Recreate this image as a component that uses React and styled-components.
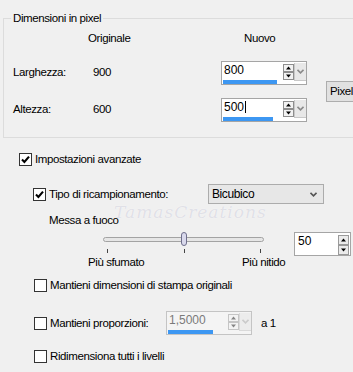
import React from "react";
import styled, { createGlobalStyle } from "styled-components";

const GlobalStyle = createGlobalStyle`
  html, body { margin: 0; padding: 0; background: #f0f0f0; }
  body {
    font-family: "Liberation Sans", Arial, sans-serif;
    font-size: 11.5px;
    letter-spacing: -0.4px;
    color: #000;
  }
`;

const Page = styled.div`
  position: relative;
  width: 353px;
  height: 372px;
  overflow: hidden;
  box-sizing: border-box;
  padding-left: 3px;
  background: #f0f0f0;
  line-height: 13px;
`;

/* ---------- group box ---------- */

const Group = styled.fieldset`
  margin: 12px 0 0 0;
  padding: 0 0 15px 9px;
  width: 390px;
  min-width: 0;
  box-sizing: border-box;
  border: 1px solid #dcdcdc;
`;

const Legend = styled.legend`
  padding: 0 2px;
  margin-left: -2px;
  line-height: 13px;
`;

const DimGrid = styled.div`
  display: grid;
  grid-template-columns: 75px 133px 86px auto;
  grid-template-rows: 16px 24px 24px;
  row-gap: 13px;
  align-items: center;
  margin-top: 7px;
`;

const Head = styled.div`
  align-self: start;
  padding-left: ${(p) => p.$pad || 0}px;
`;

const Cell = styled.div`
  padding-left: ${(p) => p.$pad || 0}px;
  padding-bottom: 2px;
`;

const PixelButton = styled.button`
  grid-column: 4;
  grid-row: 2 / span 2;
  align-self: center;
  margin: 0 0 0 19px;
  width: 60px;
  height: 21px;
  padding: 0 0 0 3px;
  text-align: left;
  font: inherit;
  letter-spacing: inherit;
  color: #000;
  background: #e1e1e1;
  border: 1px solid #adadad;
`;

/* ---------- number field with spin + drop ---------- */

const Field = styled.div`
  display: flex;
  flex-shrink: 0;
  width: ${(p) => p.$width}px;
  height: 24px;
  box-sizing: border-box;
  border: 1px solid ${(p) => (p.$disabled ? "#c4c4c4" : "#a5a5a5")};
  background: ${(p) => (p.$disabled ? "#f4f4f4" : "#fff")};
`;

const FieldMain = styled.div`
  display: flex;
  flex-direction: column;
  flex: 1;
  padding: 2px 0 0 1px;
`;

const FieldText = styled.div`
  padding-left: 1px;
  font-size: 12px;
  letter-spacing: 0;
  line-height: 13px;
  color: ${(p) => (p.$disabled ? "#7a7a7a" : "#000")};
`;

const Caret = styled.span`
  display: inline-block;
  width: 1px;
  height: 12px;
  margin-left: 1px;
  vertical-align: -2px;
  background: #000;
`;

const Bar = styled.div`
  margin-top: auto;
  height: 4px;
`;

const BarFill = styled.div`
  height: 100%;
  background: #3d97f2;
`;

const Spin = styled.div`
  display: flex;
  flex-direction: column;
  flex-shrink: 0;
  width: 11px;
  padding-top: 2px;
  opacity: ${(p) => (p.$disabled ? 0.45 : 1)};
`;

const SpinBtn = styled.div`
  display: flex;
  align-items: center;
  justify-content: center;
  width: 9px;
  height: 6px;
  border: 1px solid #8e8e8e;
  background: #f2f2f2;
`;

const DropBtn = styled.div`
  display: flex;
  flex-shrink: 0;
  align-items: center;
  justify-content: center;
  width: 12px;
  height: 18px;
  margin-top: 1px;
  box-sizing: border-box;
  border-left: 1px solid #c8c8c8;
  border-bottom: 1px solid #c8c8c8;
  background: #e8e8e8;
  opacity: ${(p) => (p.$disabled ? 0.6 : 1)};
`;

const Tri = ({ up, size = 5 }) => (
  <svg width={size} height={Math.ceil(size / 2) + 1} viewBox="0 0 5 3">
    <path d={up ? "M0 3 L2.5 0 L5 3 Z" : "M0 0 L2.5 3 L5 0 Z"} fill="#000" />
  </svg>
);

const Chevron = ({ color = "#8a8a8a" }) => (
  <svg width="7" height="5" viewBox="0 0 7 5">
    <path d="M0.5 0.8 L3.5 3.8 L6.5 0.8" stroke={color} strokeWidth="1.6" fill="none" />
  </svg>
);

function NumberField({ value, fill, width = 86, disabled, caret }) {
  return (
    <Field $width={width} $disabled={disabled}>
      <FieldMain>
        <FieldText $disabled={disabled}>
          {value}
          {caret && <Caret />}
        </FieldText>
        <Bar>
          <BarFill style={{ width: `${fill}px` }} />
        </Bar>
      </FieldMain>
      <Spin $disabled={disabled}>
        <SpinBtn><Tri up /></SpinBtn>
        <SpinBtn><Tri /></SpinBtn>
      </Spin>
      <DropBtn $disabled={disabled}>
        <Chevron color={disabled ? "#b0b0b0" : "#8a8a8a"} />
      </DropBtn>
    </Field>
  );
}

/* ---------- options ---------- */

const Row = styled.div`
  display: flex;
  align-items: center;
  height: ${(p) => p.$h || 13}px;
  margin-top: ${(p) => p.$mt || 0}px;
  padding-left: ${(p) => p.$indent || 0}px;
`;

const CheckLabel = styled.label`
  display: flex;
  align-items: center;
  flex-shrink: 0;
  gap: 3px;
  width: ${(p) => (p.$w ? `${p.$w}px` : "auto")};
  white-space: nowrap;
`;

const Box = styled.span`
  display: flex;
  align-items: center;
  justify-content: center;
  width: 13px;
  height: 13px;
  box-sizing: border-box;
  border: 1px solid #333;
  background: #fff;
`;

function Check({ checked, children, width }) {
  return (
    <CheckLabel $w={width}>
      <Box>
        {checked && (
          <svg width="9" height="9" viewBox="0 0 9 9">
            <path d="M1 4.6 L3.4 7 L8 1.6" stroke="#000" strokeWidth="2.1" fill="none" />
          </svg>
        )}
      </Box>
      {children}
    </CheckLabel>
  );
}

const Select = styled.div`
  display: flex;
  flex-shrink: 0;
  align-items: center;
  justify-content: space-between;
  width: 116px;
  height: 20px;
  box-sizing: border-box;
  padding: 0 6px 0 3px;
  border: 1px solid #acacac;
  background: #e7e7e7;
  font-size: 12px;
`;

const Text = styled.div`
  padding-left: ${(p) => p.$indent || 0}px;
  margin-top: ${(p) => p.$mt || 0}px;
  width: ${(p) => (p.$w ? `${p.$w}px` : "auto")};
  box-sizing: border-box;
  flex-shrink: 0;
  white-space: nowrap;
`;

const SliderWrap = styled.div`
  position: relative;
  flex-shrink: 0;
  width: 161px;
  margin-left: 100px;
  align-self: flex-start;
`;

const Track = styled.div`
  height: 5px;
  margin-top: 5px;
  box-sizing: border-box;
  border: 1px solid #a3a3a3;
  border-radius: 3px;
  background: #e6e6e6;
`;

const Thumb = styled.div`
  position: absolute;
  top: 0;
  width: 6px;
  height: 14px;
  box-sizing: border-box;
  border: 1px solid #6f6f8c;
  border-radius: 3px;
  background: #d9d9ec;
`;

const Ticks = styled.div`
  display: flex;
  justify-content: space-between;
  padding: 0 3px 0 4px;
  margin-top: 7px;
`;

const Tick = styled.span`
  width: 1px;
  height: 4px;
  background: #444;
`;

const SpinBox = styled.div`
  display: flex;
  flex-shrink: 0;
  width: 57px;
  height: 24px;
  margin-left: 30px;
  box-sizing: border-box;
  border: 1px solid #a5a5a5;
  background: #fff;
`;

const SpinBoxText = styled.div`
  flex: 1;
  padding: 2px 0 0 3px;
  font-size: 12px;
  letter-spacing: 0;
`;

const SpinCol = styled.div`
  display: flex;
  flex-direction: column;
  flex-shrink: 0;
  width: 12px;
  padding-top: 2px;
`;

const BigSpinBtn = styled.div`
  display: flex;
  align-items: center;
  justify-content: center;
  flex-shrink: 0;
  width: 11px;
  height: 10px;
  box-sizing: border-box;
  border: 1px solid #9a9a9a;
  background: #ebebeb;
`;

const Watermark = styled.div`
  position: absolute;
  left: 114px;
  top: 206px;
  font-family: "DejaVu Serif", serif;
  font-style: italic;
  font-size: 17px;
  letter-spacing: 1px;
  color: rgba(200, 200, 212, 0.55);
  text-shadow: 0 0 1px #fff;
  pointer-events: none;
`;

export default function App() {
  return (
    <>
      <GlobalStyle />
      <Page>
        <Group>
          <Legend>Dimensioni in pixel</Legend>
          <DimGrid>
            <Head />
            <Head>Originale</Head>
            <Head $pad={23}>Nuovo</Head>
            <Head />

            <Cell>Larghezza:</Cell>
            <Cell $pad={5}>900</Cell>
            <NumberField value="800" fill={54} />
            <PixelButton>Pixel</PixelButton>

            <Cell>Altezza:</Cell>
            <Cell $pad={5}>600</Cell>
            <NumberField value="500" fill={50} caret />
          </DimGrid>
        </Group>

        <Row $mt={15} $indent={16}>
          <Check checked>Impostazioni avanzate</Check>
        </Row>

        <Row $mt={18} $h={20} $indent={30}>
          <Check checked width={175}>Tipo di ricampionamento:</Check>
          <Select>
            Bicubico
            <Chevron color="#555" />
          </Select>
        </Row>

        <Text $indent={46} $mt={10}>Messa a fuoco</Text>

        <Row $mt={5} $h={24}>
          <SliderWrap>
            <Track />
            <Thumb style={{ left: "calc(50% - 3px)" }} />
            <Ticks>
              <Tick />
              <Tick />
              <Tick />
            </Ticks>
          </SliderWrap>
          <SpinBox>
            <SpinBoxText>50</SpinBoxText>
            <SpinCol>
              <BigSpinBtn><Tri up /></BigSpinBtn>
              <BigSpinBtn><Tri /></BigSpinBtn>
            </SpinCol>
          </SpinBox>
        </Row>

        <Row>
          <Text $indent={85} $w={239}>Più sfumato</Text>
          <Text>Più nitido</Text>
        </Row>

        <Row $mt={10} $indent={31}>
          <Check>Mantieni dimensioni di stampa originali</Check>
        </Row>

        <Row $mt={19} $h={24} $indent={31}>
          <Check width={132}>Mantieni proporzioni:</Check>
          <NumberField value="1,5000" fill={45} disabled />
          <Text $indent={9}>a 1</Text>
        </Row>

        <Row $mt={15} $indent={31}>
          <Check>Ridimensiona tutti i livelli</Check>
        </Row>

        <Watermark>TamasCreations</Watermark>
      </Page>
    </>
  );
}
